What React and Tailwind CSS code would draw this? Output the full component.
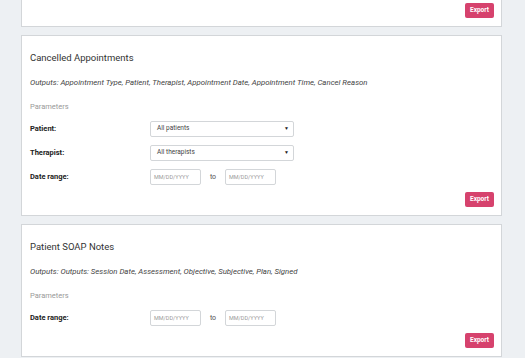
import React from "react";

const font = { fontFamily: "Roboto, 'Liberation Sans', sans-serif" };

const ExportButton = () => (
  <div className="flex justify-end">
    <button className="h-[15px] w-[29px] rounded-[2px] bg-[#d6426d] text-[6.5px] font-bold leading-[15px] text-white">
      Export
    </button>
  </div>
);

const Select = ({ value }) => (
  <div className="flex h-[16px] w-[144px] items-center justify-between rounded-[2px] border border-[#d3d6d9] bg-white pl-[6px] pr-[4px] text-[6.5px] text-[#444]">
    <span>{value}</span>
    <span className="text-[5px] text-[#222]">▼</span>
  </div>
);

const DateInput = () => (
  <div className="flex h-[16px] w-[51px] items-center rounded-[2px] border border-[#d3d6d9] bg-white pl-[3px] text-[5.5px] text-[#9a9a9a]">
    MM/DD/YYYY
  </div>
);

const Row = ({ label, children }) => (
  <div className="flex h-[16px] items-center">
    <div className="w-[120px] text-[7.5px] font-bold text-[#222]">{label}</div>
    {children}
  </div>
);

const DateRange = () => (
  <Row label="Date range:">
    <DateInput />
    <span className="w-[24px] text-center text-[7px] text-[#555]">to</span>
    <DateInput />
  </Row>
);

const ReportCard = ({ title, outputs, children }) => (
  <div className="border border-[#d3d6d9] bg-white pb-[8px] pl-[8px] pr-[7px] pt-[16px]">
    <div className="text-[9.5px] leading-[12px] text-[#333]">{title}</div>
    <div className="mt-[14px] text-[7.8px] italic leading-[10px] text-[#444]">
      {outputs}
    </div>
    <div className="mt-[14px] text-[7.5px] leading-[10px] text-[#999]">
      Parameters
    </div>
    <div className="mt-[9px] flex flex-col gap-[8px]">{children}</div>
    <div className="mt-[7px]">
      <ExportButton />
    </div>
  </div>
);

export default function App() {
  return (
    <div
      className="flex min-h-[358px] flex-col gap-[8px] bg-[#edf0f3] pl-[21px] pr-[23px]"
      style={font}
    >
      <div className="border border-t-0 border-[#d3d6d9] bg-white pb-[8px] pr-[7px] pt-[3px]">
        <ExportButton />
      </div>
      <ReportCard
        title="Cancelled Appointments"
        outputs="Outputs: Appointment Type, Patient, Therapist, Appointment Date, Appointment Time, Cancel Reason"
      >
        <Row label="Patient:">
          <Select value="All patients" />
        </Row>
        <Row label="Therapist:">
          <Select value="All therapists" />
        </Row>
        <DateRange />
      </ReportCard>
      <ReportCard
        title="Patient SOAP Notes"
        outputs="Outputs: Outputs: Session Date, Assessment, Objective, Subjective, Plan, Signed"
      >
        <DateRange />
      </ReportCard>
    </div>
  );
}
